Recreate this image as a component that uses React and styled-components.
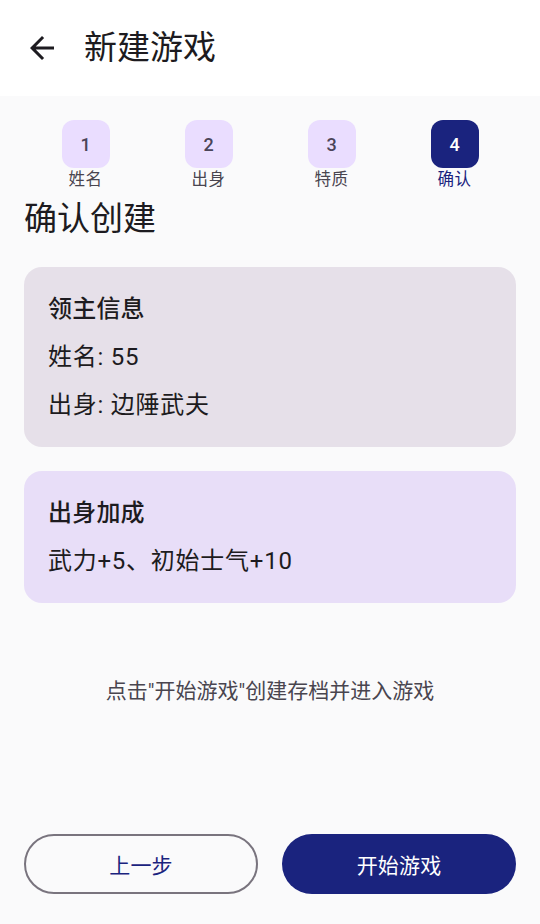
import styled, { createGlobalStyle } from "styled-components";

const GlobalStyle = createGlobalStyle`
  html, body {
    margin: 0;
    padding: 0;
    background: #fafafb;
  }
  body {
    font-family: Roboto, "Noto Sans CJK SC", sans-serif;
    color: #1d1b20;
  }
`;

const Page = styled.div`
  display: flex;
  flex-direction: column;
  min-height: 100vh;
  background: #fafafb;
`;

const TopBar = styled.header`
  display: flex;
  align-items: center;
  height: 96px;
  background: #ffffff;
  padding: 0 24px;
  box-sizing: border-box;
`;

const BackButton = styled.button`
  display: flex;
  align-items: center;
  justify-content: center;
  width: 36px;
  height: 36px;
  padding: 0;
  border: none;
  background: transparent;
  color: #1d1b20;
  cursor: pointer;
`;

const BarTitle = styled.h1`
  margin: 0 0 0 24px;
  font-size: 33px;
  font-weight: 400;
  line-height: 42px;
  color: #1d1b20;
`;

const Body = styled.main`
  display: flex;
  flex-direction: column;
  flex: 1;
  padding: 24px 24px 30px;
`;

const Steps = styled.div`
  display: grid;
  grid-template-columns: repeat(4, 1fr);
`;

const Step = styled.div`
  display: flex;
  flex-direction: column;
  align-items: center;
`;

const StepBox = styled.div`
  display: flex;
  align-items: center;
  justify-content: center;
  width: 48px;
  height: 48px;
  border-radius: 12px;
  background: ${(p) => (p.$active ? "#1a237e" : "#eaddff")};
  color: ${(p) => (p.$active ? "#ffffff" : "#4a4458")};
  font-size: 18px;
  font-weight: 500;
`;

const StepLabel = styled.span`
  font-size: 16.5px;
  line-height: 24px;
  letter-spacing: 0.5px;
  color: ${(p) => (p.$active ? "#1a237e" : "#49454f")};
`;

const SectionTitle = styled.h2`
  margin: 6px 0 27px;
  font-size: 33px;
  font-weight: 400;
  line-height: 42px;
  color: #1d1b20;
`;

const Card = styled.section`
  display: flex;
  flex-direction: column;
  gap: 12px;
  padding: 24px;
  border-radius: 18px;
  background: ${(p) => p.$bg};
  margin-bottom: 24px;
`;

const CardTitle = styled.div`
  font-size: 24px;
  font-weight: 500;
  line-height: 36px;
  letter-spacing: 0.2px;
  color: #1d1b20;
`;

const CardLine = styled.div`
  font-size: 24px;
  line-height: 36px;
  letter-spacing: 0.75px;
  color: #1d1b20;
`;

const Hint = styled.p`
  margin: 49px 0 0;
  text-align: center;
  font-size: 21px;
  line-height: 30px;
  color: #49454f;
`;

const Spacer = styled.div`
  flex: 1;
`;

const Actions = styled.div`
  display: grid;
  grid-template-columns: 1fr 1fr;
  gap: 24px;
`;

const ActionButton = styled.button`
  height: 60px;
  border-radius: 30px;
  font-family: Roboto, "Noto Sans CJK SC", sans-serif;
  font-size: 21px;
  font-weight: 400;
  letter-spacing: 0.15px;
  cursor: pointer;
  box-sizing: border-box;
  border: ${(p) => (p.$filled ? "none" : "2px solid #79747e")};
  background: ${(p) => (p.$filled ? "#1a237e" : "transparent")};
  color: ${(p) => (p.$filled ? "#ffffff" : "#1a237e")};
`;

const steps = ["姓名", "出身", "特质", "确认"];

const ArrowBack = () => (
  <svg width="36" height="36" viewBox="0 0 24 24" fill="currentColor">
    <path d="M20 11H7.83l5.59-5.59L12 4l-8 8 8 8 1.41-1.41L7.83 13H20v-2z" />
  </svg>
);

const App = () => {
  const current = 4;

  return (
    <Page>
      <GlobalStyle />
      <TopBar>
        <BackButton aria-label="返回">
          <ArrowBack />
        </BackButton>
        <BarTitle>新建游戏</BarTitle>
      </TopBar>
      <Body>
        <Steps>
          {steps.map((label, i) => (
            <Step key={label}>
              <StepBox $active={i + 1 === current}>{i + 1}</StepBox>
              <StepLabel $active={i + 1 === current}>{label}</StepLabel>
            </Step>
          ))}
        </Steps>
        <SectionTitle>确认创建</SectionTitle>
        <Card $bg="#e6e0e9">
          <CardTitle>领主信息</CardTitle>
          <CardLine>姓名: 55</CardLine>
          <CardLine>出身: 边陲武夫</CardLine>
        </Card>
        <Card $bg="#e8def8">
          <CardTitle>出身加成</CardTitle>
          <CardLine>武力+5、初始士气+10</CardLine>
        </Card>
        <Hint>点击"开始游戏"创建存档并进入游戏</Hint>
        <Spacer />
        <Actions>
          <ActionButton>上一步</ActionButton>
          <ActionButton $filled>开始游戏</ActionButton>
        </Actions>
      </Body>
    </Page>
  );
};

export default App;
